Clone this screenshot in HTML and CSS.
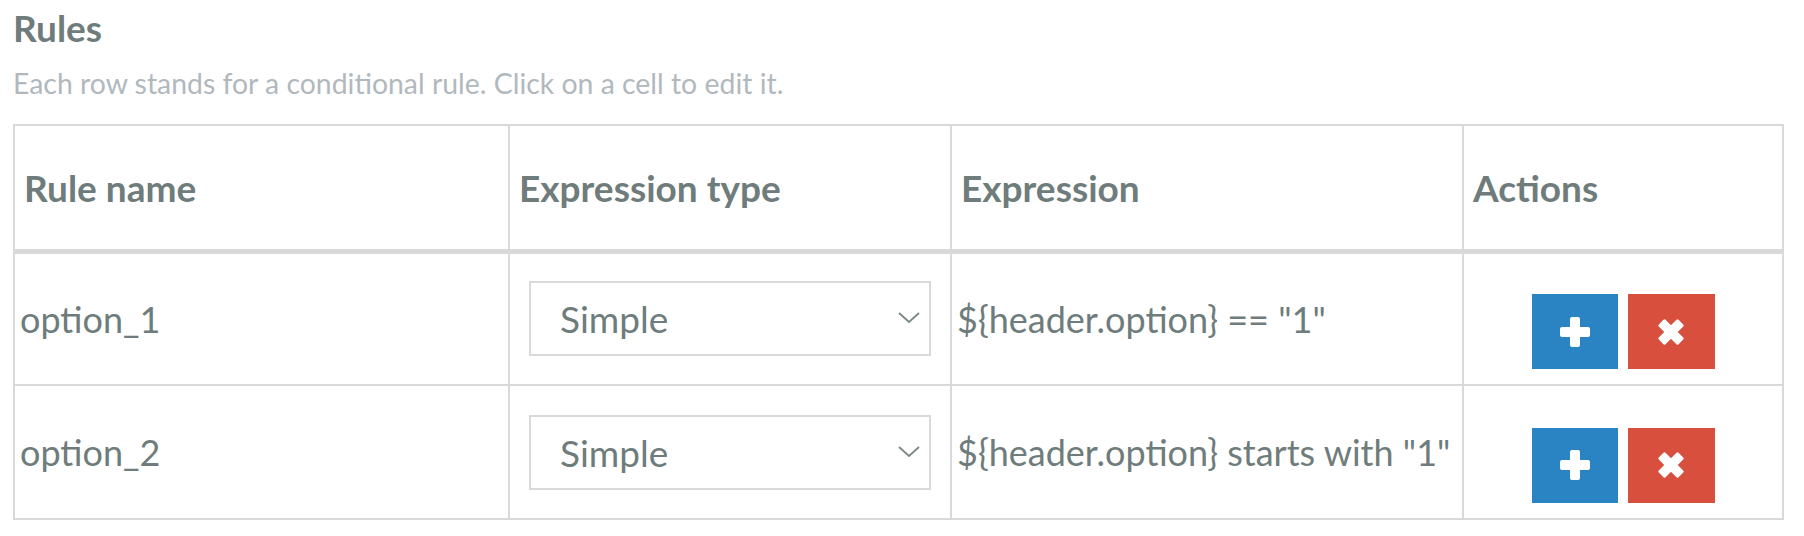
FILE: index.html
```html
<!DOCTYPE html>
<html lang="en">
<head>
    <meta charset="UTF-8">
    <title>Rules</title>
    <link rel="stylesheet" href="styles.css">
</head>
<body>
    <!-- 规则列表 -->
    <div class="rules">
        <h3 class="rules-title">Rules</h3>
        <p class="rules-hint">Each row stands for a conditional rule. Click on a cell to edit it.</p>

        <table class="rules-table">
            <colgroup>
                <col class="col-name">
                <col class="col-type">
                <col class="col-expr">
                <col class="col-actions">
            </colgroup>
            <thead>
                <tr>
                    <th>Rule name</th>
                    <th>Expression type</th>
                    <th>Expression</th>
                    <th>Actions</th>
                </tr>
            </thead>
            <tbody>
                <tr>
                    <td>option_1</td>
                    <td class="type-cell">
                        <div class="select-wrap">
                            <select class="type-select">
                                <option>Simple</option>
                                <option>Regex</option>
                            </select>
                            <svg class="select-arrow" viewBox="0 0 22 11" width="22" height="11"><polyline points="1,1 11,10 21,1" fill="none" stroke="#7b8787" stroke-width="1.8"/></svg>
                        </div>
                    </td>
                    <td>${header.option} == "1"</td>
                    <td class="actions-cell">
                        <div class="actions">
                            <button class="btn btn-add" title="Add">
                                <svg viewBox="-15 -15 30 30" width="30" height="30"><rect x="-15" y="-5" width="30" height="10" rx="2" fill="#fff"/><rect x="-5" y="-15" width="10" height="30" rx="2" fill="#fff"/></svg>
                            </button>
                            <button class="btn btn-remove" title="Remove">
                                <svg viewBox="-14 -14 28 28" width="28" height="28"><rect x="-14" y="-4.8" width="28" height="9.6" rx="1.5" fill="#fff" transform="rotate(45)"/><rect x="-14" y="-4.8" width="28" height="9.6" rx="1.5" fill="#fff" transform="rotate(-45)"/></svg>
                            </button>
                        </div>
                    </td>
                </tr>
                <tr>
                    <td>option_2</td>
                    <td class="type-cell">
                        <div class="select-wrap">
                            <select class="type-select">
                                <option>Simple</option>
                                <option>Regex</option>
                            </select>
                            <svg class="select-arrow" viewBox="0 0 22 11" width="22" height="11"><polyline points="1,1 11,10 21,1" fill="none" stroke="#7b8787" stroke-width="1.8"/></svg>
                        </div>
                    </td>
                    <td>${header.option} starts with "1"</td>
                    <td class="actions-cell">
                        <div class="actions">
                            <button class="btn btn-add" title="Add">
                                <svg viewBox="-15 -15 30 30" width="30" height="30"><rect x="-15" y="-5" width="30" height="10" rx="2" fill="#fff"/><rect x="-5" y="-15" width="10" height="30" rx="2" fill="#fff"/></svg>
                            </button>
                            <button class="btn btn-remove" title="Remove">
                                <svg viewBox="-14 -14 28 28" width="28" height="28"><rect x="-14" y="-4.8" width="28" height="9.6" rx="1.5" fill="#fff" transform="rotate(45)"/><rect x="-14" y="-4.8" width="28" height="9.6" rx="1.5" fill="#fff" transform="rotate(-45)"/></svg>
                            </button>
                        </div>
                    </td>
                </tr>
            </tbody>
        </table>
    </div>
</body>
</html>
```

FILE: styles.css
```css
/* 基础样式 */
* { margin: 0; padding: 0; box-sizing: border-box; }
body { background: #fff; font-family: 'Lato', 'Open Sans', sans-serif; color: #6f7c7c; }

.rules { padding: 6px 13px 0; }
.rules-title { font-size: 37px; font-weight: 700; line-height: 1.2; color: #6f7c7c; }
.rules-hint { font-size: 28.4px; line-height: 1.2; color: #b1b8be; margin-top: 15.6px; }

/* 规则表格 */
.rules-table { margin-top: 24px; width: 1771px; table-layout: fixed; border-collapse: collapse; }
.col-name { width: 495px; }
.col-type { width: 442px; }
.col-expr { width: 512px; }
.col-actions { width: 320px; }

.rules-table th, .rules-table td { border: 2px solid #d9d9d9; vertical-align: middle; text-align: left; white-space: nowrap; }
.rules-table thead tr { height: 126px; }
.rules-table tbody tr { height: 134px; }
.rules-table th { border-bottom-width: 5px; padding: 0 9px; font-size: 37px; font-weight: 700; }
.rules-table td { padding: 0 5px; font-size: 36px; font-weight: 400; }

/* 下拉框 */
.rules-table .type-cell { padding: 0 19px; }
.select-wrap { position: relative; }
.type-select { display: block; width: 100%; height: 75px; padding: 0 40px 0 29px; border: 2px solid #d9d9d9; border-radius: 0; background: #fff; color: #6f7c7c; font-family: 'Lato', 'Open Sans', sans-serif; font-size: 37px; -webkit-appearance: none; appearance: none; outline: none; }
.select-arrow { position: absolute; right: 11px; top: 31px; pointer-events: none; }

/* 操作按钮 */
.rules-table .actions-cell { padding: 26px 0 0; }
.actions { display: flex; justify-content: center; gap: 10px; }
.btn { width: 86px; height: 75px; border: none; border-radius: 0; display: flex; align-items: center; justify-content: center; cursor: pointer; }
.btn-add { background: #2a84c4; }
.btn-remove { background: #d84f3e; width: 87px; }
.btn:hover { opacity: 0.9; }
```
